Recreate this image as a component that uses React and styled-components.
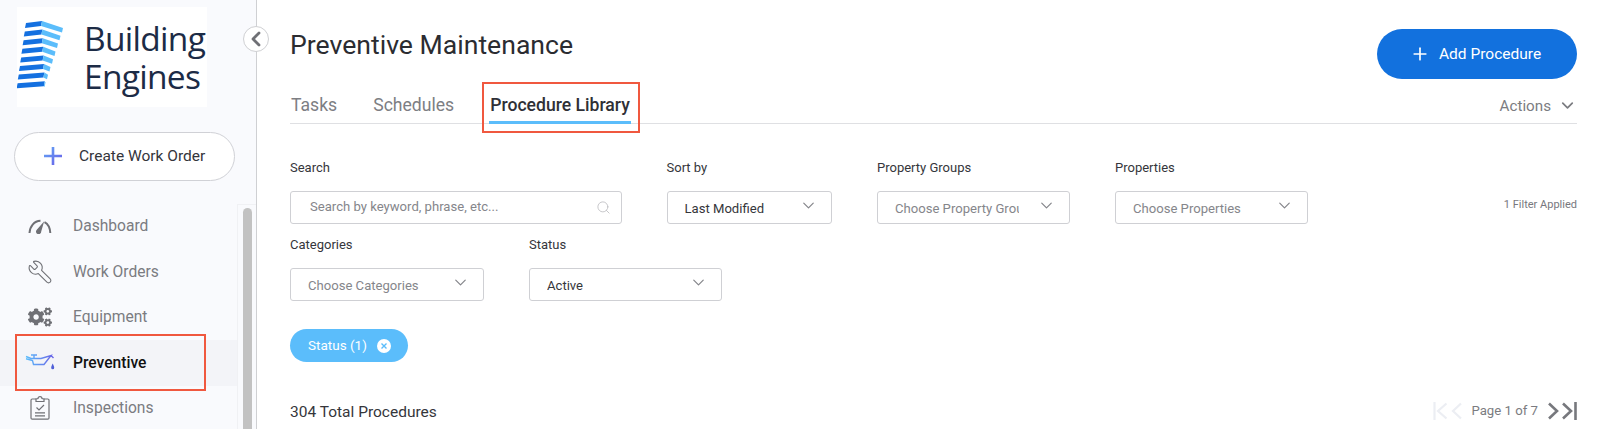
import React from "react";
import styled, { createGlobalStyle } from "styled-components";
import { ChevronDown, ChevronLeft, Plus, Search as SearchIcon, Wrench } from "lucide-react";
import { FaCogs } from "react-icons/fa";

const GlobalStyle = createGlobalStyle`
  html, body {
    margin: 0;
    padding: 0;
    background: #fff;
    font-family: Roboto, "Liberation Sans", sans-serif;
  }
  * {
    box-sizing: border-box;
  }
`;

const Page = styled.div`
  display: flex;
  width: 1600px;
  height: 429px;
  overflow: hidden;
  background: #fff;
`;

const Sidebar = styled.aside`
  position: relative;
  flex: 0 0 257px;
  display: flex;
  flex-direction: column;
  background: #f9fafd;
  border-right: 1px solid #cfd0d3;
`;

const LogoBox = styled.div`
  display: flex;
  align-items: center;
  gap: 21px;
  width: 190px;
  height: 100px;
  margin: 7px 0 0 17px;
  background: #fff;
  overflow: hidden;
`;

const LogoText = styled.div`
  font-family: "Open Sans", sans-serif;
  font-size: 33.5px;
  font-weight: 500;
  line-height: 38px;
  letter-spacing: -0.7px;
  color: #1c2b46;
  white-space: nowrap;
`;

const CreateButton = styled.button`
  display: flex;
  align-items: center;
  gap: 17px;
  width: 221px;
  height: 49px;
  margin: 25px 0 0 14px;
  padding: 0 0 2px 29px;
  background: #fff;
  border: 1px solid #d0d1d6;
  border-radius: 25px;
  font: 400 15.5px Roboto, sans-serif;
  color: #34353b;
`;

const CollapseButton = styled.div`
  position: absolute;
  top: 26px;
  left: 243px;
  display: flex;
  align-items: center;
  justify-content: center;
  width: 26px;
  height: 26px;
  background: #fff;
  border: 1px solid #cfd0d3;
  border-radius: 50%;
  color: #6f7075;
`;

const NavArea = styled.div`
  display: flex;
  flex: 1;
  margin-top: 22.5px;
  min-height: 0;
`;

const NavList = styled.nav`
  flex: 0 0 237px;
`;

const NavRow = styled.div`
  position: relative;
  display: flex;
  align-items: center;
  height: 45.5px;
  padding-left: 73px;
  font-size: 15.6px;
  font-weight: ${({ $active }) => ($active ? 500 : 400)};
  color: ${({ $active }) => ($active ? "#111" : "#7b7c81")};
  background: ${({ $active }) => ($active ? "#f3f4f8" : "transparent")};
`;

const NavIcon = styled.span`
  position: absolute;
  left: 25px;
  top: 50%;
  transform: translateY(-50%);
  display: flex;
  width: 30px;
  justify-content: center;
  color: #6f7075;
`;

const Track = styled.div`
  flex: 1;
  padding: 3px 4px 0 5px;
  border-left: 1px solid #f0f1f4;
  border-top: 1px solid #f0f1f4;
`;

const Thumb = styled.div`
  height: 100%;
  background: #c2c2c2;
  border-radius: 5px 5px 0 0;
`;

const Callout = styled.span`
  position: absolute;
  top: ${({ $top }) => $top}px;
  bottom: ${({ $bottom }) => $bottom}px;
  left: ${({ $left }) => $left}px;
  right: ${({ $right }) => $right}px;
  border: 2px solid #f0583f;
  pointer-events: none;
`;

const Main = styled.main`
  flex: 1;
  min-width: 0;
  padding: 29px 23px 0 33px;
`;

const HeaderRow = styled.div`
  display: flex;
  justify-content: space-between;
  align-items: flex-start;
  height: 50px;
`;

const Title = styled.h1`
  margin: 0;
  padding-top: 1px;
  font-size: 26.6px;
  line-height: 30px;
  font-weight: 400;
  color: #2b2c31;
`;

const AddButton = styled.button`
  display: flex;
  align-items: center;
  gap: 9px;
  width: 200px;
  height: 50px;
  padding: 0 0 0 33px;
  background: #1271de;
  border: 0;
  border-radius: 25px;
  font: 400 15.5px Roboto, sans-serif;
  color: #fff;
`;

const TabBar = styled.div`
  display: flex;
  align-items: flex-start;
  gap: 34px;
  height: 45px;
  border-bottom: 1px solid #dfe0e3;
`;

const Tab = styled.div`
  position: relative;
  height: 45px;
  padding: 14px 1px 0;
  font-size: 17.6px;
  line-height: 24px;
  font-weight: ${({ $active }) => ($active ? 500 : 400)};
  color: ${({ $active }) => ($active ? "#2f3036" : "#7d7e83")};
  border-bottom: 3px solid ${({ $active }) => ($active ? "#5bbdfb" : "transparent")};
`;

const ActionsMenu = styled.div`
  display: flex;
  align-items: center;
  gap: 7px;
  margin-left: auto;
  padding-top: 17px;
  font-size: 15.2px;
  line-height: 18px;
  color: #7b7c81;
`;

const FilterRow = styled.div`
  display: flex;
  gap: 45px;
  margin-top: ${({ $top }) => $top}px;
`;

const Field = styled.div`
  display: flex;
  flex-direction: column;
  gap: 13px;
  width: ${({ $width }) => $width}px;
`;

const Label = styled.label`
  font-size: 13px;
  line-height: 20px;
  color: #35363b;
`;

const Control = styled.div`
  display: flex;
  align-items: center;
  justify-content: space-between;
  height: 33px;
  padding: 0 ${({ $search }) => ($search ? "10px" : "13px")} 0 ${({ $search }) => ($search ? "19px" : "17px")};
  background: #fff;
  border: 1px solid #cfd0d4;
  border-radius: 3px;
  color: ${({ $muted }) => ($muted ? "#85868b" : "#35363b")};
  font-size: 13.1px;
`;

const ControlText = styled.span`
  display: block;
  width: ${({ $clip }) => ($clip ? `${$clip}px` : "auto")};
  overflow: hidden;
  white-space: nowrap;
  padding: ${({ $search }) => ($search ? "0 0 2px" : "2px 0 0")};
`;

const ChevronSlot = styled.span`
  display: flex;
  margin-top: -4px;
  color: #84858a;
`;

const FilterCount = styled.div`
  margin: 38px 0 0 auto;
  font-size: 11px;
  line-height: 18px;
  color: #77787d;
`;

const ChipRow = styled.div`
  display: flex;
`;

const Chip = styled.div`
  display: inline-flex;
  align-items: center;
  gap: 10px;
  height: 33px;
  margin-top: 28px;
  padding: 0 17px 2px 18px;
  background: #5bbdfb;
  border-radius: 17px;
  font-size: 13.5px;
  color: #fff;
`;

const FooterRow = styled.div`
  display: flex;
  align-items: center;
  justify-content: space-between;
  margin-top: 39px;
  height: 22px;
`;

const TotalCount = styled.div`
  font-size: 15.5px;
  color: #35363b;
`;

const Pager = styled.div`
  display: flex;
  align-items: center;
  gap: 3px;
  padding-bottom: 3px;
  font-size: 13.2px;
  color: #7b7c81;
`;

const PagerText = styled.span`
  margin: 0 6px 0 5px;
`;

const PagerIcon = styled.svg`
  display: block;
  width: ${({ $wide }) => ($wide ? 15 : 12)}px;
  height: 18px;
  fill: none;
  stroke: ${({ $off }) => ($off ? "#eceef3" : "#77787d")};
  stroke-width: ${({ $off }) => ($off ? 2.2 : 2.6)};
`;

// stripes get shorter on the right as they go down
const logoBars = Array.from({ length: 8 }, (_, i) => {
  const y = 2 + i * 8.6;
  const left = 9 - i * 1.2;
  const mid = 25 + i * 0.4;
  const right = 46 - i * 2.5;
  const drop = 7 - i * 0.8;
  return { y, left, mid, right, drop };
});

const LogoMark = () => (
  <svg width="46" height="76" viewBox="0 0 46 76" style={{ flex: "none" }}>
    {logoBars.map(({ y, left, mid, right, drop }) => (
      <g key={y}>
        <polygon
          points={`${left},${y + 2} ${mid},${y} ${mid - 1},${y + 5} ${left - 1},${y + 7}`}
          fill="#1470e0"
        />
        <polygon
          points={`${mid},${y} ${right},${y + drop} ${right - 1},${y + drop + 4.5} ${mid - 1},${y + 5}`}
          fill="#5bbdfb"
        />
      </g>
    ))}
  </svg>
);

const GaugeIcon = () => (
  <svg width="24" height="16" viewBox="0 0 24 16">
    <path d="M1.5 15C1.8 8.5 6 3 12.5 2.8" fill="none" stroke="#6f7075" strokeWidth="2" />
    <path d="M16.5 4.2C20 6 22 10 22.3 15" fill="none" stroke="#6f7075" strokeWidth="2" />
    <path d="M16.2 3.2L13.2 13.6A2.6 2.6 0 1 1 9 11.6Z" fill="#6f7075" />
  </svg>
);

const OilCanIcon = () => (
  <svg width="30" height="20" viewBox="0 0 30 20">
    <defs>
      <linearGradient id="oil-can" x1="0" x2="1" y1="0" y2="0">
        <stop offset="0" stopColor="#5bbdfb" />
        <stop offset="1" stopColor="#6a63e6" />
      </linearGradient>
    </defs>
    <path
      d="M1 3.5L6 5.5H10.5M10.5 5.5H16L26 2.5L19 11.5H8.5L7.5 7.5L1 5.8M6 2H12M9 2V5.5M26 2.5L28.5 5"
      fill="none"
      stroke="url(#oil-can)"
      strokeWidth="1.4"
    />
    <path d="M27.7 10.5C26.8 12.5 26.2 13.5 26.2 14.7A1.5 1.5 0 0 0 29.2 14.7C29.2 13.5 28.6 12.5 27.7 10.5Z" fill="#4f5fd8" />
  </svg>
);

const ClipboardIcon = () => (
  <svg width="20" height="24" viewBox="0 0 20 24" fill="none" stroke="#6f7075" strokeWidth="1.2">
    <path d="M6 3H2.2A1.2 1.2 0 0 0 1 4.2V22a1.2 1.2 0 0 0 1.2 1.2H17.8A1.2 1.2 0 0 0 19 22V4.2A1.2 1.2 0 0 0 17.8 3H14" />
    <path d="M6 5.5V3L8 2.6A2 2 0 0 1 12 2.6L14 3V5.5Z" />
    <path d="M6.5 11.5L9 14L14 9M5 16.8H15M5 19.8H15" />
  </svg>
);

const GradientPlus = () => (
  <svg width="18" height="18" viewBox="0 0 18 18" style={{ flex: "none" }}>
    <defs>
      <linearGradient id="plus-fill" x1="0" x2="1" y1="0" y2="1">
        <stop offset="0" stopColor="#62a8f5" />
        <stop offset="1" stopColor="#6a5ce8" />
      </linearGradient>
    </defs>
    <path d="M7.7 0H10.3V7.7H18V10.3H10.3V18H7.7V10.3H0V7.7H7.7Z" fill="url(#plus-fill)" />
  </svg>
);

const ChipClose = () => (
  <svg width="14" height="14" viewBox="0 0 14 14" style={{ marginTop: 2 }}>
    <circle cx="7" cy="7" r="7" fill="#fff" />
    <path d="M4.5 4.5L9.5 9.5M9.5 4.5L4.5 9.5" stroke="#5bbdfb" strokeWidth="1.4" />
  </svg>
);

const navItems = [
  { label: "Dashboard", icon: <GaugeIcon /> },
  { label: "Work Orders", icon: <Wrench size={26} strokeWidth={1} style={{ transform: "scaleX(-1)" }} /> },
  { label: "Equipment", icon: <FaCogs size={24} /> },
  { label: "Preventive", icon: <OilCanIcon />, active: true },
  { label: "Inspections", icon: <ClipboardIcon /> },
];

const Select = ({ label, value, muted, width, clip }) => (
  <Field $width={width}>
    <Label>{label}</Label>
    <Control $muted={muted}>
      <ControlText $clip={clip}>{value}</ControlText>
      <ChevronSlot>
        <ChevronDown size={19} strokeWidth={1.5} />
      </ChevronSlot>
    </Control>
  </Field>
);

const App = () => {
  return (
    <Page>
      <GlobalStyle />
      <Sidebar>
        <LogoBox>
          <LogoMark />
          <LogoText>
            Building
            <br />
            Engines
          </LogoText>
        </LogoBox>
        <CreateButton>
          <GradientPlus />
          Create Work Order
        </CreateButton>
        <CollapseButton>
          <ChevronLeft size={24} strokeWidth={2.8} />
        </CollapseButton>
        <NavArea>
          <NavList>
            {navItems.map((item) => (
              <NavRow key={item.label} $active={item.active}>
                <NavIcon>{item.icon}</NavIcon>
                {item.label}
                {item.active && <Callout $top={-6} $bottom={-5} $left={15} $right={31} />}
              </NavRow>
            ))}
          </NavList>
          <Track>
            <Thumb />
          </Track>
        </NavArea>
      </Sidebar>
      <Main>
        <HeaderRow>
          <Title>Preventive Maintenance</Title>
          <AddButton>
            <Plus size={20} strokeWidth={2} />
            Add Procedure
          </AddButton>
        </HeaderRow>
        <TabBar>
          <Tab>Tasks</Tab>
          <Tab>Schedules</Tab>
          <Tab $active>
            Procedure Library
            <Callout $top={3} $bottom={-12} $left={-7} $right={-9} />
          </Tab>
          <ActionsMenu>
            Actions
            <ChevronDown size={19} strokeWidth={2.2} />
          </ActionsMenu>
        </TabBar>
        <FilterRow $top={34}>
          <Field $width={331.5}>
            <Label>Search</Label>
            <Control $search $muted>
              <ControlText $search>Search by keyword, phrase, etc...</ControlText>
              <SearchIcon size={15} strokeWidth={1.2} color="#b5b6ba" />
            </Control>
          </Field>
          <Select label="Sort by" value="Last Modified" width={165.5} />
          <Select label="Property Groups" value="Choose Property Groups" muted width={193} clip={124} />
          <Select label="Properties" value="Choose Properties" muted width={193} />
          <FilterCount>1 Filter Applied</FilterCount>
        </FilterRow>
        <FilterRow $top={11}>
          <Select label="Categories" value="Choose Categories" muted width={194} />
          <Select label="Status" value="Active" width={193} />
        </FilterRow>
        <ChipRow>
          <Chip>
            Status (1)
            <ChipClose />
          </Chip>
        </ChipRow>
        <FooterRow>
          <TotalCount>304 Total Procedures</TotalCount>
          <Pager>
            <PagerIcon $off $wide viewBox="0 0 15 18">
              <path d="M1.5 0V18M13.5 1.5L5 9L13.5 16.5" />
            </PagerIcon>
            <PagerIcon $off viewBox="0 0 12 18">
              <path d="M10 1.5L2 9L10 16.5" />
            </PagerIcon>
            <PagerText>Page 1 of 7</PagerText>
            <PagerIcon viewBox="0 0 12 18">
              <path d="M2 1.5L10 9L2 16.5" />
            </PagerIcon>
            <PagerIcon $wide viewBox="0 0 15 18">
              <path d="M1 1.5L9 9L1 16.5M13.5 0V18" />
            </PagerIcon>
          </Pager>
        </FooterRow>
      </Main>
    </Page>
  );
};

export default App;
